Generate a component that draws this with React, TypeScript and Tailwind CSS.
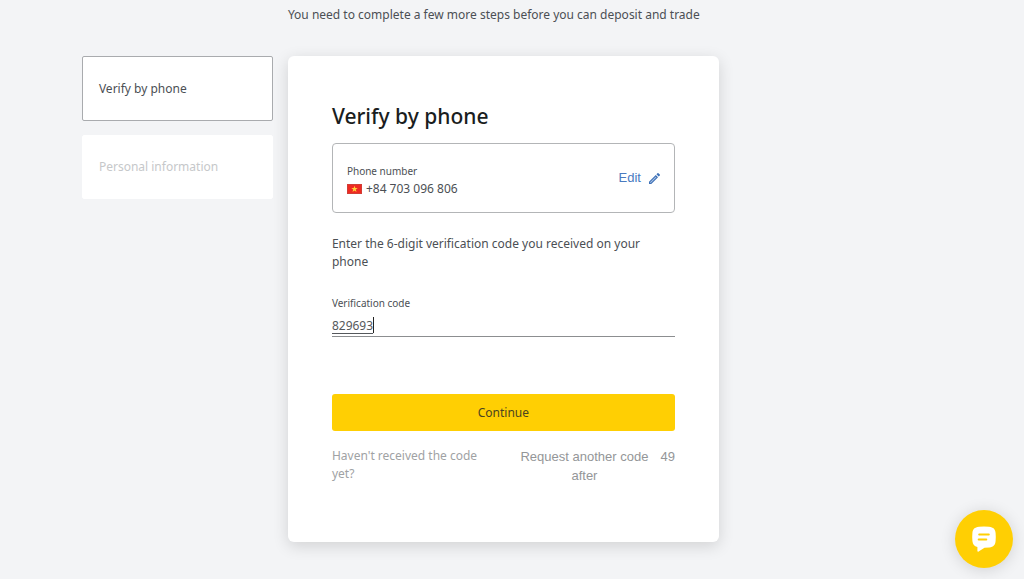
import { useState } from "react";

function FlagVietnam() {
  return (
    <svg viewBox="0 0 15 10" className="h-2.5 w-[15px] shrink-0" role="img" aria-label="Vietnam">
      <rect width="15" height="10" fill="#ee2a22" />
      <rect x="0.5" y="0.5" width="14" height="9" fill="none" stroke="#c9443c" strokeOpacity="0.8" />
      <path
        d="M7.5 1.8l.8 2.3h2.4L8.8 5.6l.7 2.3-2-1.4-2 1.4.7-2.3-1.9-1.5h2.4z"
        fill="#ffd23a"
      />
    </svg>
  );
}

function PencilIcon() {
  return (
    <svg viewBox="3 3 18 18" className="size-[11px] shrink-0" aria-hidden="true">
      <path d="M5 19v-.92l9.06-9.06.92.92L5.92 19z" fill="#a9c3e6" />
      <path
        fill="#3f72b8"
        d="M14.06 9.02l.92.92L5.92 19H5v-.92l9.06-9.06M17.66 3c-.25 0-.51.1-.7.29l-1.83 1.83 3.75 3.75 1.83-1.83c.39-.39.39-1.02 0-1.41l-2.34-2.34c-.2-.2-.45-.29-.71-.29zm-3.6 3.19L3 17.25V21h3.75L17.81 9.94l-3.75-3.75z"
      />
    </svg>
  );
}

function ChatIcon() {
  return (
    <svg viewBox="0 0 24 26" className="h-[26px] w-6" aria-hidden="true">
      <path
        d="M7 .8Q12 0 17 .8C21.500 1.300 23.200 3.200 23.600 7Q24 11 23.600 15C23.200 19 21.500 21 17.500 21.400L12.500 21.700 6.600 25.600C6 26 5.400 25.700 5.400 25V21C2.200 20.300 .8 18.400 .4 15Q0 11 .4 7C.8 3.200 2.500 1.300 7 .8z"
        fill="#fff"
      />
      <path d="M7.200 8.500h9.600M6.700 13.500h7.600" stroke="#ffcf03" strokeWidth="2" strokeLinecap="round" />
    </svg>
  );
}

export default function App() {
  const [code, setCode] = useState("829693");

  return (
    <div className="min-h-screen bg-[#f3f4f6] px-[8%] pt-1.5 pb-9 font-['Noto_Sans',sans-serif] text-xs leading-[18px] text-[#4b4f54]">
      <div className="flex max-w-[637px] flex-col gap-8">
        <p className="pl-[206px]">You need to complete a few more steps before you can deposit and trade</p>

        <div className="flex items-start gap-[15px]">
          <ol className="flex w-[191px] shrink-0 flex-col gap-[14px]">
            <li aria-current="step" className="rounded-xs border border-[#a9abae] bg-white px-4 pt-[23px] pb-[22px]">
              Verify by phone
            </li>
            <li className="rounded-xs border border-white bg-white px-4 py-[22px] text-[#c6c8ca]">
              Personal information
            </li>
          </ol>

          <main className="min-w-0 flex-1 rounded-md bg-white px-11 pt-11 pb-[57px] shadow-[0_4px_16px_rgba(0,0,0,0.14)]">
            <h1 className="text-[21px] leading-8 font-medium text-[#1a1d20]">Verify by phone</h1>

            <section className="mt-[11px] flex items-center justify-between rounded border border-[#b3b5b7] px-[14px]">
              <div className="pt-[18px] pb-[14px]">
                <p className="text-[10px] leading-[18px]">Phone number</p>
                <p className="flex items-center gap-1">
                  <FlagVietnam />
                  +84 703 096 806
                </p>
              </div>
              <button
                type="button"
                className="flex items-center gap-2 font-['Liberation_Sans',sans-serif] text-[13px] text-[#4a7abf]"
              >
                Edit
                <PencilIcon />
              </button>
            </section>

            <form onSubmit={(event) => event.preventDefault()}>
              <p className="mt-[22px]">Enter the 6-digit verification code you received on your phone</p>

              <label htmlFor="code" className="mt-6 block text-[10px] leading-4">
                Verification code
              </label>
              <div className="relative mt-1 border-b border-[#8c8e90]">
                <input
                  id="code"
                  inputMode="numeric"
                  maxLength={6}
                  value={code}
                  onChange={(event) => setCode(event.target.value)}
                  className="block h-[21px] w-full bg-transparent text-xs leading-5 text-[#55585c] underline decoration-1 underline-offset-3 caret-transparent outline-none"
                />
                <span aria-hidden="true" className="absolute top-0.5 left-0 flex h-4 border-r border-[#222] text-xs">
                  <span className="invisible">{code}</span>
                </span>
              </div>

              <button
                type="submit"
                className="mt-[57px] h-[37px] w-full rounded-[3px] bg-[#ffcf03] text-[#4b4420]"
              >
                Continue
              </button>
            </form>

            <div className="mt-4 flex items-start justify-between text-[#a0a2a4]">
              <p className="w-40">Haven't received the code yet?</p>
              <div className="flex gap-3 font-['Liberation_Sans',sans-serif] text-[13px] leading-[19px] text-[#949698]">
                <button type="button" disabled className="w-[128px] text-center">
                  Request another code after
                </button>
                <span>49</span>
              </div>
            </div>
          </main>
        </div>
      </div>

      <button
        type="button"
        aria-label="Open chat"
        className="fixed right-[11px] bottom-[11px] flex size-[58px] items-center justify-center rounded-full bg-[#ffcf03] shadow-[0_2px_16px_rgba(0,0,0,0.14)]"
      >
        <ChatIcon />
      </button>
    </div>
  );
}
